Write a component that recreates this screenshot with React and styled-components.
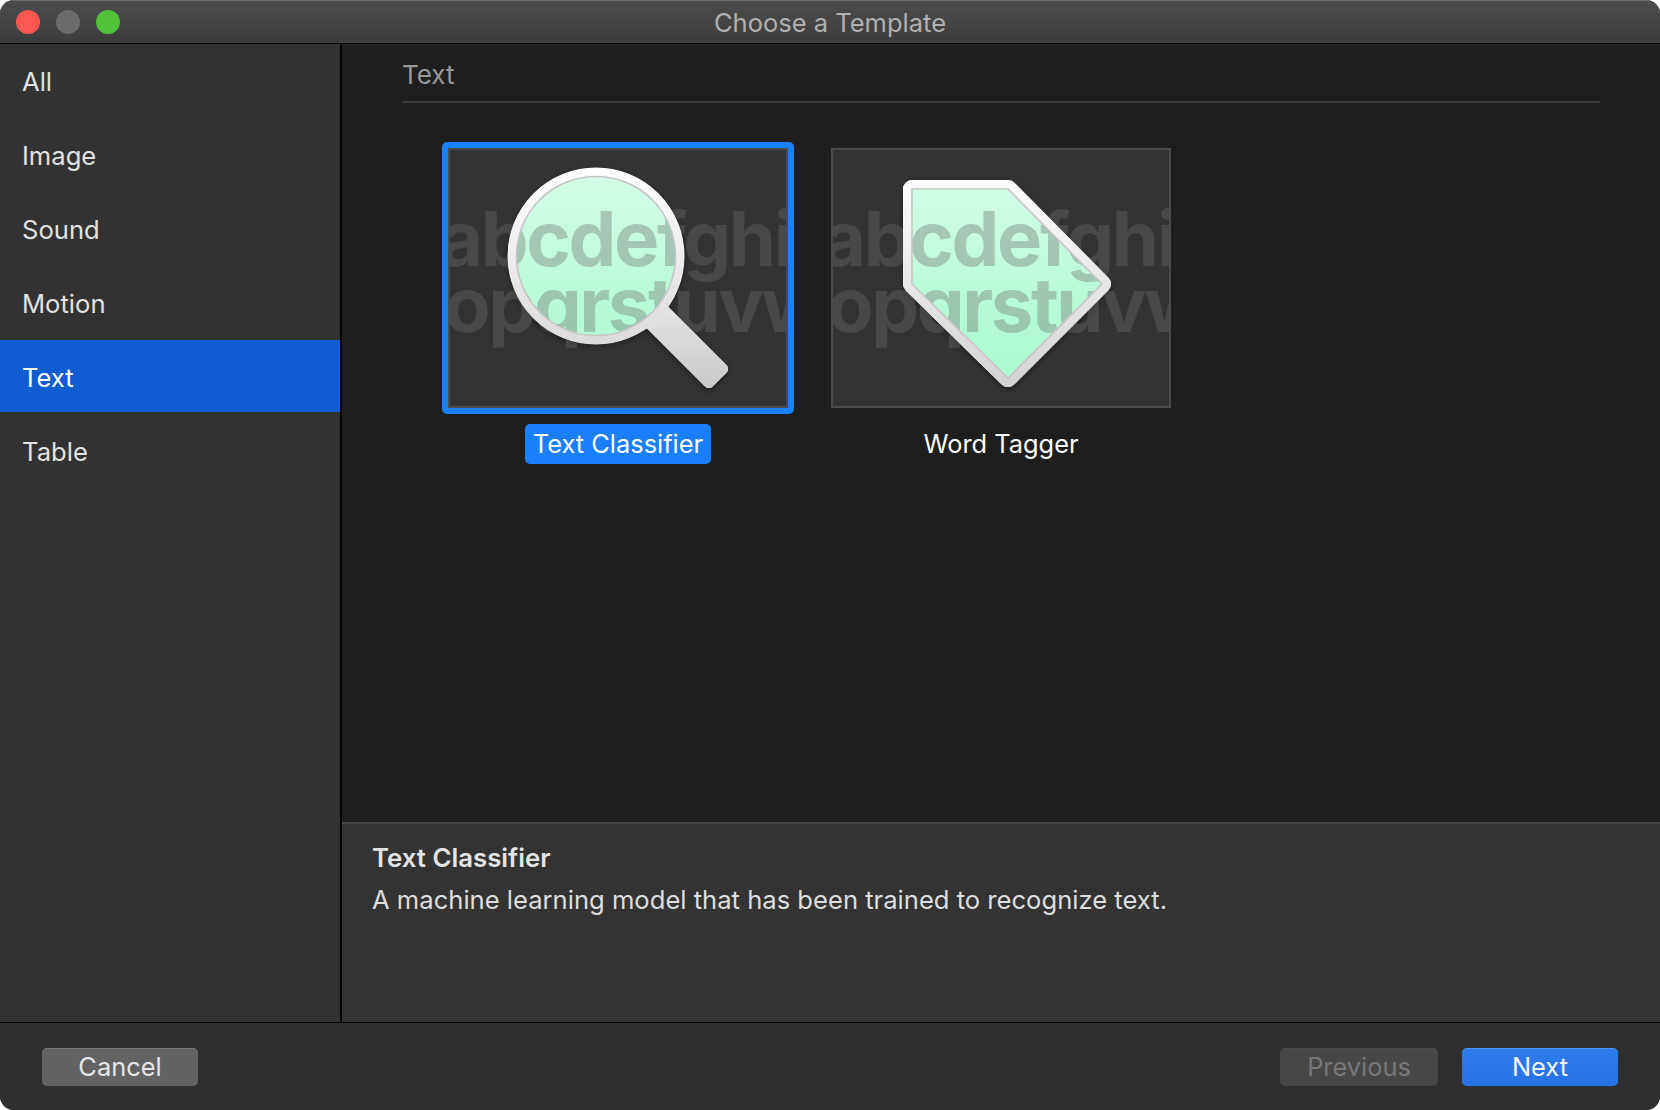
import React from 'react';
import styled, {createGlobalStyle} from 'styled-components';

const GlobalStyle = createGlobalStyle`
    html, body {
        margin: 0;
        padding: 0;
        background: #fff;
    }
    body {
        font-family: Inter, "Liberation Sans", sans-serif;
    }
`;

const Window = styled.div`
    width: 1660px;
    height: 1110px;
    display: grid;
    grid-template-rows: 44px 1fr 87px;
    border-radius: 14px;
    overflow: hidden;
    background: #323232;
`;

const TitleBar = styled.div`
    position: relative;
    display: flex;
    align-items: center;
    justify-content: center;
    background: linear-gradient(#4c4c4c, #3c3c3c);
    border-top: 1px solid #6a6a6a;
    border-bottom: 1px solid #000;
    box-sizing: border-box;
    color: #b0b0b0;
    font-size: 25.5px;
`;

const Lights = styled.div`
    position: absolute;
    left: 16px;
    top: 9px;
    display: flex;
    gap: 16px;
`;

const Light = styled.span`
    width: 24px;
    height: 24px;
    border-radius: 50%;
    background: ${p => p.$color};
`;

const Body = styled.div`
    display: grid;
    grid-template-columns: 342px 1fr;
    min-height: 0;
    border-bottom: 1px solid #000;
`;

const Sidebar = styled.div`
    background: #323232;
    border-right: 2px solid #000;
    display: flex;
    flex-direction: column;
`;

const SideItem = styled.div`
    height: 72px;
    box-sizing: border-box;
    margin-bottom: 2px;
    padding: 2px 0 0 22px;
    display: flex;
    align-items: center;
    font-size: 25.6px;
    color: ${p => (p.$active ? '#fff' : '#e2e2e2')};
    background: ${p => (p.$active ? '#0f5dd0' : 'transparent')};
`;

const Main = styled.div`
    display: grid;
    grid-template-rows: 1fr 200px;
    min-height: 0;
    background: #1e1e1e;
`;

const Content = styled.div`
    padding: 0 60px;
`;

const SectionTitle = styled.div`
    height: 59px;
    padding-top: 3px;
    box-sizing: border-box;
    display: flex;
    align-items: center;
    font-size: 26px;
    color: #999;
    border-bottom: 2px solid #3c3c3c;
`;

const Templates = styled.div`
    display: flex;
    gap: 31px;
    margin: 39px 0 0 40px;
`;

const Template = styled.div`
    display: flex;
    flex-direction: column;
    align-items: center;
    width: 352px;
`;

const Frame = styled.div`
    width: 352px;
    height: 272px;
    box-sizing: border-box;
    border: 6px solid ${p => (p.$selected ? '#1a7ffc' : 'transparent')};
    border-radius: 5px;
`;

const Tile = styled.div`
    width: 340px;
    height: 260px;
    box-sizing: border-box;
    border: 2px solid #4b4b4b;
    background: #333;
    overflow: hidden;
    svg {
        display: block;
        margin: -2px;
    }
`;

const Letters = styled.text`
    font-family: Inter, "Liberation Sans", sans-serif;
    font-weight: 700;
    font-size: 76px;
    letter-spacing: -2.4px;
    fill: rgba(108, 108, 108, 0.37);
`;

const TemplateName = styled.div`
    margin-top: 10px;
    height: 40px;
    box-sizing: border-box;
    padding: 0 8px 2px;
    display: flex;
    align-items: center;
    border-radius: 5px;
    font-size: 25.4px;
    color: #fff;
    background: ${p => (p.$selected ? '#1a7ffc' : 'transparent')};
`;

const Description = styled.div`
    background: #333;
    border-top: 2px solid #464646;
    padding: 18px 30px;
`;

const DescriptionTitle = styled.div`
    font-size: 25.8px;
    font-weight: 600;
    line-height: 32px;
    color: #e4e4e4;
`;

const DescriptionText = styled.div`
    margin-top: 10px;
    font-size: 25.6px;
    line-height: 32px;
    color: #dedede;
`;

const Footer = styled.div`
    background: #2f2f2f;
    display: flex;
    align-items: center;
    justify-content: space-between;
    padding: 1px 42px 0;
`;

const ButtonRow = styled.div`
    display: flex;
    gap: 24px;
`;

const Button = styled.div`
    width: ${p => p.$width || 156}px;
    height: 38px;
    padding-bottom: 2px;
    border-radius: 5px;
    display: flex;
    align-items: center;
    justify-content: center;
    font-size: 25.4px;
    box-sizing: border-box;
    border-top: 1px solid ${p => (p.$primary ? '#4a93f2' : p.$disabled ? '#4c4c4c' : '#7a7a7a')};
    color: ${p => (p.$primary ? '#f2f6ff' : p.$disabled ? '#787878' : '#e6e6e6')};
    background: ${p => (p.$primary ? 'linear-gradient(#2e7cec, #2672e4)' : p.$disabled ? '#474747' : '#636363')};
`;

const sections = ['All', 'Image', 'Sound', 'Motion', 'Text', 'Table'];

const Thumbnail = ({id, children}) => (
    <svg width="340" height="260" viewBox="0 0 340 260">
        <defs>
            <linearGradient id={id + 'Mint'} gradientUnits="userSpaceOnUse" x1="0" y1="30" x2="0" y2="235">
                <stop offset="0" stopColor="#d2fde7" />
                <stop offset="1" stopColor="#a8f9cf" />
            </linearGradient>
            <linearGradient id={id + 'Rim'} gradientUnits="userSpaceOnUse" x1="0" y1="20" x2="0" y2="240">
                <stop offset="0" stopColor="#ffffff" />
                <stop offset="1" stopColor="#d2d2d2" />
            </linearGradient>
            <linearGradient id={id + 'Handle'} gradientUnits="userSpaceOnUse" x1="0" y1="150" x2="0" y2="242">
                <stop offset="0" stopColor="#e8e8e8" />
                <stop offset="1" stopColor="#c8c8c8" />
            </linearGradient>
            <filter id={id + 'Shadow'} x="-20%" y="-20%" width="140%" height="140%">
                <feDropShadow dx="0" dy="2" stdDeviation="3" floodColor="#000" floodOpacity="0.45" />
            </filter>
        </defs>
        {children}
    </svg>
);

const LetterRows = () => (
    <>
        <Letters x="-9" y="118">abcdefghi</Letters>
        <Letters x="-4" y="184">opqrstuvw</Letters>
    </>
);

// starts under the rim, so it must not reach into the glass
const HANDLE = '201.9,176.1 260.9,235.1 275.1,220.9 216.1,161.9';

const MagnifierIcon = () => (
    <Thumbnail id="lens">
        <g filter="url(#lensShadow)">
            <polygon points={HANDLE} fill="#d8d8d8" stroke="#d8d8d8" strokeWidth="10" strokeLinejoin="round" />
            <circle cx="148" cy="108" r="88" fill="#eee" />
        </g>
        <circle cx="148" cy="108" r="79" fill="url(#lensMint)" />
        <LetterRows />
        <polygon
            points={HANDLE}
            fill="url(#lensHandle)"
            stroke="url(#lensHandle)"
            strokeWidth="10"
            strokeLinejoin="round"
        />
        <circle cx="148" cy="108" r="84" fill="none" stroke="url(#lensRim)" strokeWidth="9" />
        <circle cx="148" cy="108" r="79.5" fill="none" stroke="#c6c6c6" strokeWidth="1.6" />
    </Thumbnail>
);

const TAG = '81,41 177,41 271,136 177,230 81,136';

const TagIcon = () => (
    <Thumbnail id="tag">
        <mask id="tagHole">
            <rect width="340" height="260" fill="#fff" />
            <polygon points={TAG} fill="#000" />
        </mask>
        <polygon points={TAG} fill="#eee" stroke="#eee" strokeWidth="18" strokeLinejoin="round" filter="url(#tagShadow)" />
        <polygon points={TAG} fill="url(#tagMint)" />
        <LetterRows />
        <g mask="url(#tagHole)">
            <polygon points={TAG} fill="none" stroke="url(#tagRim)" strokeWidth="18" strokeLinejoin="round" />
        </g>
        <polygon points={TAG} fill="none" stroke="#c6c6c6" strokeWidth="1.6" />
    </Thumbnail>
);

const App = () => (
    <>
        <GlobalStyle />
        <Window>
            <TitleBar>
                <Lights>
                    <Light $color="#fc5753" />
                    <Light $color="#6b6b6b" />
                    <Light $color="#53c23b" />
                </Lights>
                Choose a Template
            </TitleBar>
            <Body>
                <Sidebar>
                    {sections.map(name => (
                        <SideItem key={name} $active={name === 'Text'}>{name}</SideItem>
                    ))}
                </Sidebar>
                <Main>
                    <Content>
                        <SectionTitle>Text</SectionTitle>
                        <Templates>
                            <Template>
                                <Frame $selected>
                                    <Tile><MagnifierIcon /></Tile>
                                </Frame>
                                <TemplateName $selected>Text Classifier</TemplateName>
                            </Template>
                            <Template>
                                <Frame>
                                    <Tile><TagIcon /></Tile>
                                </Frame>
                                <TemplateName>Word Tagger</TemplateName>
                            </Template>
                        </Templates>
                    </Content>
                    <Description>
                        <DescriptionTitle>Text Classifier</DescriptionTitle>
                        <DescriptionText>A machine learning model that has been trained to recognize text.</DescriptionText>
                    </Description>
                </Main>
            </Body>
            <Footer>
                <Button>Cancel</Button>
                <ButtonRow>
                    <Button $disabled $width={158}>Previous</Button>
                    <Button $primary>Next</Button>
                </ButtonRow>
            </Footer>
        </Window>
    </>
);

export default App;
